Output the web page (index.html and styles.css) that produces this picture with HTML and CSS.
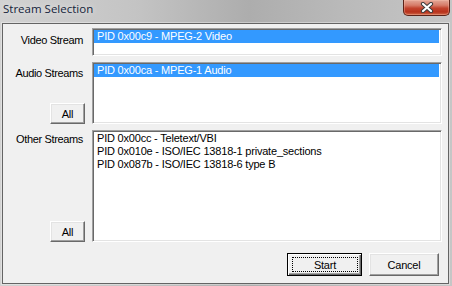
FILE: index.html
```html
<!DOCTYPE html>
<html lang="en">
<head>
    <meta charset="UTF-8">
    <title>Stream Selection</title>
    <link rel="stylesheet" href="styles.css">
</head>
<body>

<div class="window">
    <div class="titlebar">
        <span class="title">Stream Selection</span>
        <button class="close" title="Close">
            <svg width="14" height="11" viewBox="0 0 14 11">
                <path d="M3 2 L11 9 M11 2 L3 9" stroke="#3c3c3c" stroke-width="4.2" stroke-linecap="round"/>
                <path d="M3 2 L11 9 M11 2 L3 9" stroke="#ffffff" stroke-width="2.2" stroke-linecap="round"/>
            </svg>
        </button>
    </div>

    <div class="client">
        <div class="streams">
            <div class="side video-side">
                <span class="label">Video Stream</span>
            </div>
            <div class="listbox">
                <div class="item selected">PID 0x00c9 - MPEG-2 Video</div>
            </div>

            <div class="side audio-side">
                <span class="label">Audio Streams</span>
                <button class="btn all">All</button>
            </div>
            <div class="listbox">
                <div class="item selected">PID 0x00ca - MPEG-1 Audio</div>
            </div>

            <div class="side other-side">
                <span class="label">Other Streams</span>
                <button class="btn all">All</button>
            </div>
            <div class="listbox">
                <div class="item">PID 0x00cc - Teletext/VBI</div>
                <div class="item">PID 0x010e - ISO/IEC 13818-1 private_sections</div>
                <div class="item">PID 0x087b - ISO/IEC 13818-6 type B</div>
            </div>
        </div>

        <div class="actions">
            <button class="btn default"><span class="focus">Start</span></button>
            <button class="btn cancel">Cancel</button>
        </div>
    </div>
</div>

</body>
</html>
```

FILE: styles.css
```css
body {
    margin: 0;
    font-family: 'Liberation Sans', Arial, sans-serif;
    font-size: 11px;
}
.window {
    width: 452px;
    height: 286px;
    box-sizing: border-box;
    padding: 0 3px 2px 2px;
    display: flex;
    flex-direction: column;
    background: linear-gradient(90deg, #d2d2d2 0%, #c4c4c4 30%, #adadad 55%, #b9b9b9 75%, #c6c6c6 100%);
}
.titlebar {
    height: 23px;
    display: flex;
    align-items: flex-start;
}
.title {
    font-family: 'Open Sans', 'Noto Sans', sans-serif;
    font-size: 11.5px;
    color: #14233a;
    margin: 1px 0 0 1px;
    text-shadow: 0 0 6px rgba(255, 255, 255, 0.8);
}
.close {
    margin-left: auto;
    margin-right: -1px;
    width: 47px;
    height: 16px;
    padding: 0;
    border: 1px solid #5c2318;
    border-top: none;
    border-radius: 0 0 5px 5px;
    background: linear-gradient(#e3a898 0%, #d77c69 35%, #c2432d 55%, #b8321c 80%, #cf6a4a 100%);
    box-shadow: inset 0 0 0 1px rgba(255, 200, 180, 0.35);
    display: flex;
    align-items: center;
    justify-content: center;
}
.client {
    flex: 1;
    background-color: #f0f0f0;
    border: 1px solid #646464;
    box-shadow: 0 0 0 1px rgba(255, 255, 255, 0.35);
    display: flex;
    flex-direction: column;
}
.streams {
    display: grid;
    grid-template-columns: 89px 350px;
    grid-template-rows: 28px 62px 112px;
    row-gap: 6px;
    padding-top: 4px;
}
.side {
    display: flex;
    flex-direction: column;
    align-items: flex-end;
    justify-content: space-between;
    padding-right: 7px;
}
.label {
    margin-right: 2px;
    line-height: 13px;
    letter-spacing: -0.35px;
}
.video-side {
    padding-top: 6px;
}
.audio-side {
    padding-top: 5px;
}
.other-side {
    padding-top: 3px;
}
.listbox {
    box-sizing: border-box;
    background-color: #fff;
    border: 1px solid;
    border-color: #a0a0a0 #fff #fff #a0a0a0;
    box-shadow: inset 1px 1px 0 #696969, inset -1px -1px 0 #e3e3e3;
    padding: 1px 1px 1px 1px;
}
.item {
    line-height: 13px;
    padding-left: 3px;
    white-space: nowrap;
    letter-spacing: -0.2px;
}
.item.selected {
    background-color: #3399ff;
    color: #fff;
    margin-right: 1px;
}
.btn {
    box-sizing: border-box;
    font-family: 'Liberation Sans', Arial, sans-serif;
    font-size: 11px;
    letter-spacing: -0.2px;
    color: #000;
    background-color: #f0f0f0;
    border: 1px solid;
    border-color: #fff #696969 #696969 #fff;
    box-shadow: inset -1px -1px 0 #a0a0a0, inset 1px 1px 0 #e3e3e3;
    padding: 0;
}
.all {
    width: 35px;
    height: 21px;
}
.actions {
    display: flex;
    justify-content: flex-end;
    gap: 7px;
    margin-top: 11px;
    padding-right: 9px;
}
.actions .btn {
    height: 23px;
}
.default {
    width: 75px;
    border: 1px solid #000;
    box-shadow: inset 1px 1px 0 #fff, inset -1px -1px 0 #696969, inset -2px -2px 0 #a0a0a0;
    padding: 3px 3px 3px 4px;
}
.focus {
    display: flex;
    align-items: center;
    justify-content: center;
    height: 100%;
    box-sizing: border-box;
    border: 1px dotted #000;
}
.cancel {
    width: 70px;
}
```
